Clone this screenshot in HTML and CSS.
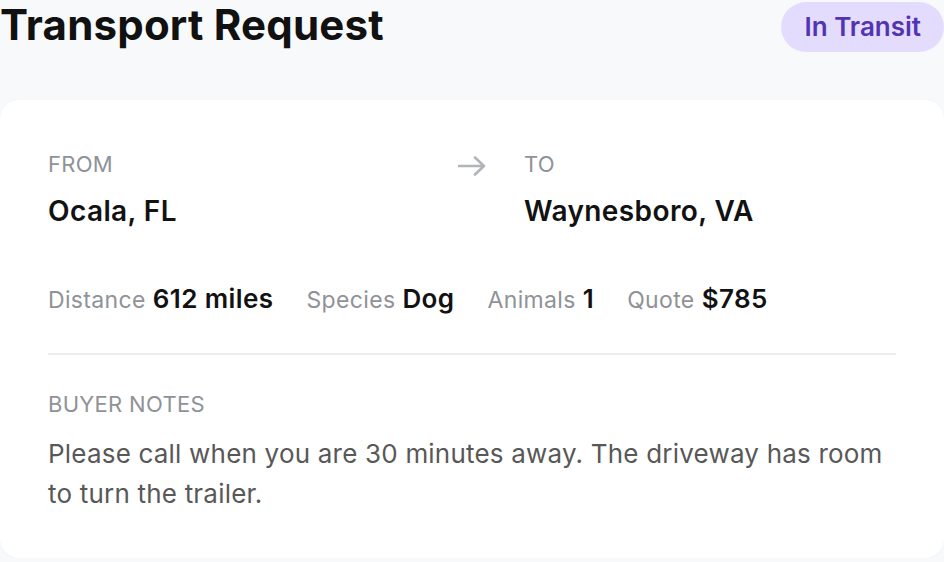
FILE: index.html
```html
<!DOCTYPE html>
<html lang="en">
<head>
  <meta charset="UTF-8" />
  <title>Transport Request</title>
  <link rel="stylesheet" href="styles.css">
</head>
<body>
  <div class="header">
    <h1 class="title">Transport Request</h1>
    <span class="status">In Transit</span>
  </div>

  <div class="card">
    <div class="route">
      <div class="place">
        <div class="label">FROM</div>
        <div class="city">Ocala, FL</div>
      </div>
      <svg class="arrow" width="28" height="20" viewBox="0 0 28 20">
        <path d="M1 10 H26 M17 1.5 L26 10 L17 18.5" fill="none" stroke="#b1b5ba" stroke-width="2.6" stroke-linecap="round" stroke-linejoin="round"/>
      </svg>
      <div class="place">
        <div class="label">TO</div>
        <div class="city">Waynesboro, VA</div>
      </div>
    </div>

    <div class="stats">
      <div class="stat"><span class="stat-label">Distance</span><b>612 miles</b></div>
      <div class="stat"><span class="stat-label">Species</span><b>Dog</b></div>
      <div class="stat"><span class="stat-label">Animals</span><b>1</b></div>
      <div class="stat"><span class="stat-label">Quote</span><b>$785</b></div>
    </div>

    <div class="notes">
      <div class="label">BUYER NOTES</div>
      <p class="notes-text">Please call when you are 30 minutes away. The driveway has room to turn the trailer.</p>
    </div>
  </div>
</body>
</html>
```

FILE: styles.css
```css
body {
  font-family: Inter, "Noto Sans", sans-serif;
  background: #f8f9fb;
  margin: 0;
  color: #121212;
}

.header {
  display: flex;
  justify-content: space-between;
  align-items: center;
  height: 50px;
  margin-top: 2px;
}

.title {
  margin: 0 0 4px;
  font-size: 42px;
  line-height: 42px;
  font-weight: 700;
  letter-spacing: 0.2px;
  color: #111;
}

.status {
  background: #e4dcfd;
  color: #5233b2;
  font-size: 26px;
  font-weight: 600;
  line-height: 50px;
  padding: 0 23px;
  border-radius: 25px;
  letter-spacing: 0;
}

.card {
  margin-top: 48px;
  background: #ffffff;
  border-radius: 20px;
  padding: 50px 48px 44px;
  box-shadow: 0 1px 3px rgba(0, 0, 0, 0.03);
}

.route {
  display: grid;
  grid-template-columns: 1fr auto 1fr;
  column-gap: 38px;
  align-items: start;
}

.arrow {
  margin-top: 6px;
}

.label {
  font-size: 22px;
  line-height: 28px;
  color: #8f9297;
  letter-spacing: 0.3px;
}

.city {
  margin-top: 15px;
  font-size: 28px;
  line-height: 36px;
  font-weight: 600;
  letter-spacing: 0.4px;
}

.stats {
  display: flex;
  gap: 33px;
  margin-top: 52px;
  padding-bottom: 35px;
  border-bottom: 2px solid #ececec;
  line-height: 36px;
}

.stat {
  display: flex;
  align-items: baseline;
  gap: 7px;
}

.stat-label {
  font-size: 23px;
  color: #8f9297;
  letter-spacing: 0.35px;
}

.stat b {
  font-size: 26px;
  font-weight: 600;
  letter-spacing: 0.4px;
}

.notes {
  margin-top: 35px;
}

.notes-text {
  margin: 16px 0 0;
  font-size: 26px;
  line-height: 40px;
  color: #585858;
  letter-spacing: 0.2px;
}
```
